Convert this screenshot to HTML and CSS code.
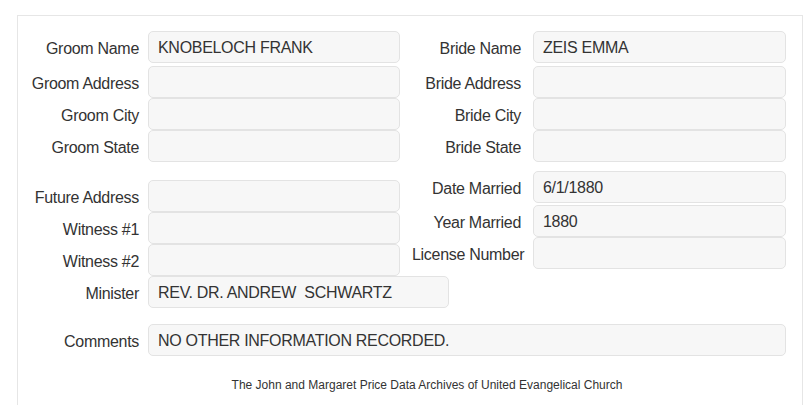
FILE: index.html
```html
<!DOCTYPE html>
<html>
<head>
<meta charset="utf-8">
<link rel="stylesheet" href="styles.css">
</head>
<body>
<div class="panel">
  <div class="section top">
    <div class="col col-left">
      <div class="row first"><div class="label">Groom Name</div><div class="field">KNOBELOCH FRANK</div></div>
      <div class="row"><div class="label">Groom Address</div><div class="field"></div></div>
      <div class="row"><div class="label">Groom City</div><div class="field"></div></div>
      <div class="row"><div class="label">Groom State</div><div class="field"></div></div>
    </div>
    <div class="col col-right">
      <div class="row first"><div class="label">Bride Name</div><div class="field">ZEIS EMMA</div></div>
      <div class="row"><div class="label">Bride Address</div><div class="field"></div></div>
      <div class="row"><div class="label">Bride City</div><div class="field"></div></div>
      <div class="row"><div class="label">Bride State</div><div class="field"></div></div>
    </div>
  </div>
  <div class="section mid">
    <div class="col col-left shifted">
      <div class="row"><div class="label">Future Address</div><div class="field"></div></div>
      <div class="row"><div class="label">Witness #1</div><div class="field"></div></div>
      <div class="row"><div class="label">Witness #2</div><div class="field"></div></div>
      <div class="row"><div class="label">Minister</div><div class="field wide">REV. DR. ANDREW&nbsp; SCHWARTZ</div></div>
    </div>
    <div class="col col-right">
      <div class="row first-date"><div class="label">Date Married</div><div class="field">6/1/1880</div></div>
      <div class="row"><div class="label">Year Married</div><div class="field">1880</div></div>
      <div class="row"><div class="label overflow">License Number</div><div class="field"></div></div>
    </div>
  </div>
  <div class="row comments"><div class="label">Comments</div><div class="field full">NO OTHER INFORMATION RECORDED.</div></div>
  <div class="footer">The John and Margaret Price Data Archives of United Evangelical Church</div>
</div>
</body>
</html>
```

FILE: styles.css
```css
html, body {
  margin: 0;
  padding: 0;
  background: #ffffff;
  font-family: "Liberation Sans", Arial, sans-serif;
  color: #333333;
  overflow: hidden;
}

.panel {
  box-sizing: border-box;
  width: 786px;
  height: 400px;
  margin: 15px 0 0 17px;
  padding: 15px 16px 0 0;
  border: 1px solid #e6e6e6;
  border-bottom: none;
}

.section {
  display: flex;
  align-items: flex-start;
}

.top {
  margin-bottom: 9px;
}

.col {
  display: flex;
  flex-direction: column;
  flex: none;
}

.col-left {
  width: 382px;
}

.col-right {
  width: 386px;
}

.col-left .label {
  width: 130px;
  padding: 3px 9px 0;
}

.col-right .label {
  width: 133px;
  padding: 3px 12px 0;
}

.col-right .label.overflow {
  padding: 3px 8px 0 12px;
  justify-content: flex-start;
}

.row {
  display: flex;
  height: 32px;
}

.row.first {
  margin-bottom: 3px;
}

.row.first-date {
  margin-bottom: 2px;
}

.shifted {
  margin-top: 9px;
}

.label {
  box-sizing: border-box;
  flex: none;
  display: flex;
  align-items: center;
  justify-content: flex-end;
  white-space: nowrap;
  font-size: 16px;
  letter-spacing: -0.3px;
  color: #333333;
}

.field {
  box-sizing: border-box;
  flex: none;
  width: 252px;
  height: 32px;
  display: flex;
  align-items: center;
  padding: 1px 9px 0;
  background: #f7f7f7;
  border: 1px solid #e3e3e3;
  border-radius: 5px;
  font-size: 16px;
  letter-spacing: -0.3px;
  color: #333333;
  white-space: nowrap;
}

.col-right .field {
  width: 253px;
}

.field.wide {
  width: 301px;
}

.comments {
  margin-top: 16px;
}

.comments .label {
  width: 130px;
  padding: 3px 9px 0;
}

.field.full {
  width: 638px;
}

.footer {
  margin-top: 21px;
  padding-left: 50px;
  text-align: center;
  font-size: 12px;
  line-height: 17px;
  color: #333333;
}
```
